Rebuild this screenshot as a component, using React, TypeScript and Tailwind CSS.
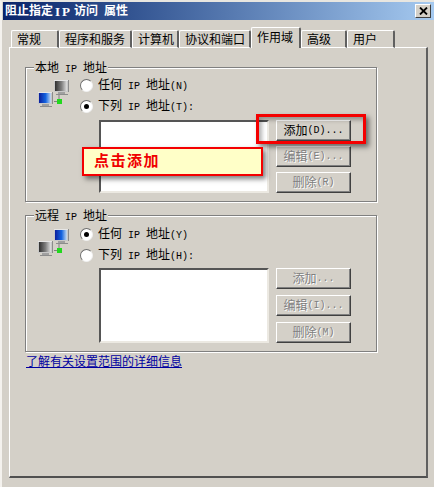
const tabs = [
  { label: "常规", width: "w-[48px]" },
  { label: "程序和服务", width: "w-[73px]" },
  { label: "计算机", width: "w-[47px]" },
  { label: "协议和端口", width: "w-[72px]" },
  { label: "作用域", width: "w-[50px]", active: true },
  { label: "高级", width: "w-[46px]" },
  { label: "用户", width: "w-[48px]" },
];

// half width latin, 6px per char like the bitmap font
function L({ children }: { children: string }) {
  return <span className="whitespace-pre font-['Liberation_Mono',monospace] text-[10px]">{children}</span>;
}

function Monitor({ x, y, active }: { x: number; y: number; active: boolean }) {
  const id = active ? "screen-on" : "screen-off";
  return (
    <g transform={`translate(${x} ${y})`}>
      <rect x="0" y="0" width="15" height="12" fill="#c8c8c8" />
      <rect x="0" y="0" width="15" height="1" fill="#e6e6e6" />
      <rect x="14" y="0" width="1" height="12" fill="#8c8c8c" />
      <rect x="1" y="1" width="12" height="10" fill={`url(#${id})`} />
      <rect x="4" y="12" width="7" height="2" fill="#a0a0a0" />
      <rect x="2" y="14" width="12" height="1" fill="#8c8c8c" />
    </g>
  );
}

function NetIcon({ topActive }: { topActive: boolean }) {
  return (
    <svg width="34" height="30" viewBox="0 0 34 30" className="block">
      <defs>
        <linearGradient id="screen-on" x1="0" x2="1" y1="0" y2="0">
          <stop offset="0" stopColor="#0a1e9c" />
          <stop offset="0.55" stopColor="#1464e0" />
          <stop offset="1" stopColor="#c8dcf0" />
        </linearGradient>
        <linearGradient id="screen-off" x1="0" x2="1" y1="0" y2="0">
          <stop offset="0" stopColor="#303030" />
          <stop offset="0.55" stopColor="#808080" />
          <stop offset="1" stopColor="#e0e0e0" />
        </linearGradient>
      </defs>
      <path d="M16 22.5H21V16" fill="none" stroke="#808080" strokeWidth="1" />
      <Monitor x={16} y={1} active={topActive} />
      <Monitor x={0} y={13} active={!topActive} />
      <rect x="19" y="20" width="5" height="5" fill="#22d81e" />
    </svg>
  );
}

function Radio({ checked }: { checked?: boolean }) {
  return (
    <span className="flex h-[13px] w-[13px] shrink-0 items-center justify-center rounded-full border border-t-[#6e6e6e] border-l-[#6e6e6e] border-r-[#f0f0f0] border-b-[#f0f0f0] bg-white">
      {checked && <span className="h-[5px] w-[5px] rounded-full bg-black" />}
    </span>
  );
}

function Button({ children, disabled }: { children: React.ReactNode; disabled?: boolean }) {
  return (
    <div
      className={`flex h-[21px] w-[75px] items-center justify-center border border-t-white border-l-white border-r-[#404040] border-b-[#404040] shadow-[inset_-1px_-1px_0_#808080] ${
        disabled ? "text-[#808080] [text-shadow:1px_1px_0_#fff]" : "text-black"
      }`}
    >
      {children}
    </div>
  );
}

function IpGroup({
  title,
  rows,
  buttons,
  topActive,
  firstChecked,
  className,
  bodyTop,
  listTop,
  listHeight,
  buttonGap,
}: {
  title: string;
  rows: { label: string; key: string }[];
  buttons: { label: string; key: string; disabled?: boolean }[];
  topActive: boolean;
  firstChecked: boolean;
  className: string;
  bodyTop: string;
  listTop: string;
  listHeight: string;
  buttonGap: string;
}) {
  return (
    <div className={`relative w-[352px] border border-[#808080] pl-[12px] shadow-[1px_1px_0_#fff,inset_1px_1px_0_#fff] ${className}`}>
      <div className="absolute left-[8px] top-[-7px] bg-[#d4d0c8] px-[1px] leading-[14px]">
        {title}
        <L> IP </L>
        地址
      </div>
      <div className={`flex ${bodyTop}`}>
        <div className="w-[42px] shrink-0">
          <NetIcon topActive={topActive} />
        </div>
        <div className="flex flex-col gap-[8px]">
          {rows.map((row, i) => (
            <div key={row.key} className="flex h-[13px] items-center gap-[5px] leading-[13px]">
              <Radio checked={firstChecked === (i === 0)} />
              <span className="whitespace-nowrap pt-[1px]">
                {row.label}
                <L> IP </L>
                地址<L>{row.key}</L>
              </span>
            </div>
          ))}
        </div>
      </div>
      <div className={`ml-[61px] flex gap-[7px] ${listTop}`}>
        <div
          className={`w-[170px] border-2 border-t-[#555] border-l-[#555] border-r-[#ece9e2] border-b-[#ece9e2] bg-white ${listHeight}`}
        />
        <div className={`flex flex-col ${buttonGap}`}>
          {buttons.map((b) => (
            <Button key={b.key} disabled={b.disabled}>
              {b.label}
              <L>{b.key}</L>
            </Button>
          ))}
        </div>
      </div>
    </div>
  );
}

export default function App() {
  return (
    <div className="relative h-[487px] w-[434px] overflow-hidden border-l-[2px] border-t-[2px] border-l-[#f4f2ee] border-t-[#e8e6e0] bg-[#d4d0c8] font-['Liberation_Sans','Noto_Sans_CJK_SC',sans-serif] text-[12px] text-black">
      <div className="ml-[1px] flex h-[18px] items-center justify-between bg-gradient-to-r from-[#0a246a] to-[#a6caf0] pl-[2px] pr-[3px]">
        <span className="flex items-center font-bold leading-none text-white">
          阻止指定
          <span className="w-[21px] text-center font-['Liberation_Serif',serif] text-[13px] tracking-[2px]">IP</span>
          访问
          <span className="ml-[6px]">属性</span>
        </span>
        <div className="flex h-[14px] w-[16px] items-center justify-center border border-t-white border-l-white border-r-[#404040] border-b-[#404040] bg-[#d4d0c8]">
          <svg width="9" height="8" viewBox="0 0 9 8">
            <path d="M1 0.5 8 7.5M8 0.5 1 7.5" stroke="#000" strokeWidth="1.8" fill="none" />
          </svg>
        </div>
      </div>

      <div className="relative z-10 ml-[9px] mt-[7px] flex h-[21px] items-start">
        {tabs.map((tab) => (
          <div
            key={tab.label}
            className={`flex items-center rounded-t-[2px] border-l border-t border-r-2 border-l-white border-t-white border-r-[#606060] bg-[#d4d0c8] pl-[5px] ${tab.width} ${
              tab.active ? "h-[21px] pb-[1px]" : "mt-[3px] h-[18px] border-b border-b-white pt-[1px]"
            }`}
          >
            {tab.label}
          </div>
        ))}
      </div>

      <div className="ml-[7px] mt-[-1px] h-[431px] w-[419px] border-b-2 border-l border-r-2 border-t border-b-[#505050] border-l-white border-r-[#606060] border-t-white pl-[15px] pt-[19px]">
        <IpGroup
          title="本地"
          rows={[
            { label: "任何", key: "(N)" },
            { label: "下列", key: "(T):" },
          ]}
          buttons={[
            { label: "添加", key: "(D)..." },
            { label: "编辑", key: "(E)...", disabled: true },
            { label: "删除", key: "(R)", disabled: true },
          ]}
          topActive={false}
          firstChecked={false}
          className="h-[135px]"
          bodyTop="pt-[11px]"
          listTop="mt-[7px]"
          listHeight="h-[73px]"
          buttonGap="gap-[5px]"
        />
        <IpGroup
          title="远程"
          rows={[
            { label: "任何", key: "(Y)" },
            { label: "下列", key: "(H):" },
          ]}
          buttons={[
            { label: "添加", key: "...", disabled: true },
            { label: "编辑", key: "(I)...", disabled: true },
            { label: "删除", key: "(M)", disabled: true },
          ]}
          topActive
          firstChecked
          className="mt-[13px] h-[137px]"
          bodyTop="pt-[12px]"
          listTop="mt-[6px]"
          listHeight="h-[75px]"
          buttonGap="gap-[6px]"
        />
        <a className="ml-[1px] mt-[3px] block w-fit leading-[14px] text-[#0000a0] underline">了解有关设置范围的详细信息</a>
      </div>

      {/* 标注 */}
      <div className="absolute left-[254px] top-[112px] h-[30px] w-[110px] border-[3px] border-[#f40000] shadow-[3px_3px_5px_rgba(0,0,0,0.5),inset_3px_3px_4px_rgba(0,0,0,0.3)]" />
      <div className="absolute left-[80px] top-[145px] flex h-[29px] w-[181px] items-center border-2 border-[#f40000] bg-[#ffffc8] pl-[10px] text-[15px] font-bold tracking-[1.5px] text-[#f00000] shadow-[3px_3px_5px_rgba(0,0,0,0.5)]">
        点击添加
      </div>
    </div>
  );
}
